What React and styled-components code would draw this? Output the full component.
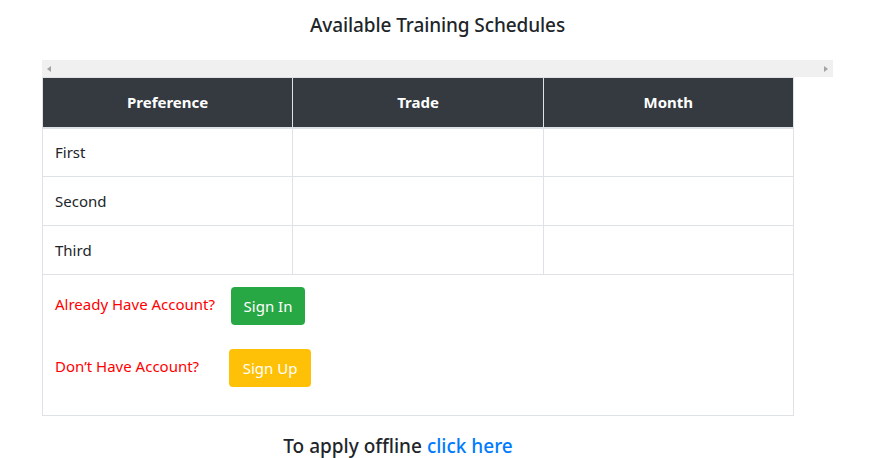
import React from "react";
import styled, { createGlobalStyle } from "styled-components";

const Global = createGlobalStyle`
  html, body { margin: 0; padding: 0; background: #fff; }
  body { font-family: "Noto Sans", "Open Sans", sans-serif; color: #212529; font-size: 15px; }
  * { box-sizing: border-box; }
`;

const Page = styled.div`
  width: 873px;
  padding: 0 40px 0 42px;
`;

const Title = styled.h4`
  margin: 0;
  height: 60px;
  padding-top: 11px;
  font-size: 19px;
  font-weight: 500;
  line-height: 28px;
  text-align: center;
  letter-spacing: -0.1px;
`;

const Scroller = styled.div`
  height: 17px;
  width: 791px;
  background: #f0f0f0;
  display: flex;
  align-items: center;
  justify-content: space-between;
  padding: 0 5px 0 5px;
`;

const Arrow = styled.span`
  width: 0;
  height: 0;
  border-top: 3.5px solid transparent;
  border-bottom: 3.5px solid transparent;
  ${(p) => (p.$dir === "left" ? "border-right: 4px solid #a3a3a3;" : "border-left: 4px solid #a3a3a3;")}
`;

const Table = styled.table`
  width: 752px;
  border-collapse: collapse;
  table-layout: fixed;
  border: 1px solid #dee2e6;
`;

const Th = styled.th`
  background: #343a40;
  color: #fff;
  font-weight: 700;
  font-size: 15px;
  height: 50px;
  padding: 0 12px;
  border: 1px solid #dee2e6;
  border-bottom: 2px solid #dee2e6;
  text-align: center;
  vertical-align: middle;
`;

const Td = styled.td`
  border: 1px solid #dee2e6;
  height: 49px;
  padding: 0 12px;
  font-size: 15px;
  vertical-align: middle;
`;

const AccountCell = styled.td`
  border: 1px solid #dee2e6;
  padding: 12px 12px 28px;
`;

const Line = styled.div`
  display: flex;
  align-items: center;
  height: 38px;
  & + & { margin-top: 24px; }
`;

const Label = styled.span`
  color: #ff0000;
  font-size: 15px;
  margin-right: ${(p) => p.$gap}px;
  position: relative;
  top: -2px;
`;

const Button = styled.button`
  height: 38px;
  padding: 0 12px;
  border: none;
  border-radius: 4px;
  color: #fff;
  font-family: inherit;
  font-size: 15px;
  background: ${(p) => p.$bg};
  width: ${(p) => p.$w}px;
`;

const Footer = styled.h4`
  margin: 0;
  padding-top: 16px;
  width: 712px;
  font-size: 19px;
  font-weight: 500;
  text-align: center;
  line-height: 28px;
`;

const Link = styled.a`
  color: #007bff;
  text-decoration: none;
`;

const rows = ["First", "Second", "Third"];

export default function App() {
  return (
    <>
      <Global />
      <Page>
        <Title>Available Training Schedules</Title>
        <Scroller>
          <Arrow $dir="left" />
          <Arrow $dir="right" />
        </Scroller>
        <Table>
          <thead>
            <tr>
              <Th>Preference</Th>
              <Th>Trade</Th>
              <Th>Month</Th>
            </tr>
          </thead>
          <tbody>
            {rows.map((r) => (
              <tr key={r}>
                <Td>{r}</Td>
                <Td />
                <Td />
              </tr>
            ))}
            <tr>
              <AccountCell colSpan={3}>
                <Line>
                  <Label $gap={16}>Already Have Account?</Label>
                  <Button $bg="#28a745" $w={74}>Sign In</Button>
                </Line>
                <Line>
                  <Label $gap={30}>Don’t Have Account?</Label>
                  <Button $bg="#ffc107" $w={82}>Sign Up</Button>
                </Line>
              </AccountCell>
            </tr>
          </tbody>
        </Table>
        <Footer>
          To apply offline <Link href="#">click here</Link>
        </Footer>
      </Page>
    </>
  );
}
